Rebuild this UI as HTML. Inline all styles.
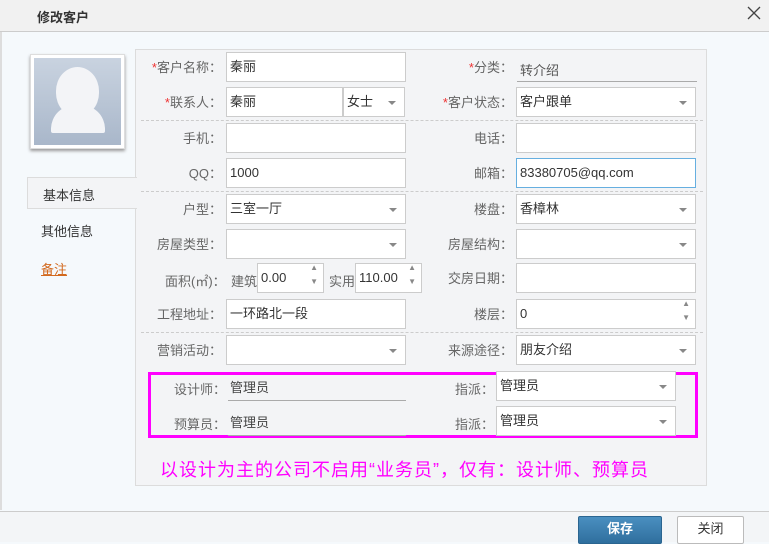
<!DOCTYPE html>
<html><head><meta charset="utf-8"><style>
*{margin:0;padding:0;box-sizing:border-box}
body{width:769px;height:542px;overflow:hidden;background:#f5f9fc;font-family:"Liberation Sans","Noto Sans CJK SC",sans-serif;font-size:13px;color:#555;position:relative}
.a{position:absolute}
.title{left:0;top:0;width:769px;height:32px;background:#f1f1f1;border-bottom:1px solid #ccc}
.panel{left:135px;top:49px;width:572px;height:437px;background:#f3f4f6;border:1px solid #dcdcdc}
.lab{text-align:right;width:120px;font-size:13px;color:#666;line-height:16px}
.inp{height:30px;background:#fff;border:1px solid #ccc;padding-left:3px;line-height:28px;color:#333;font-size:13px}
.dd:after{content:"";position:absolute;right:8px;top:13px;border-left:4px solid transparent;border-right:4px solid transparent;border-top:4px solid #888}
.dash{left:141px;width:562px;border-top:1px dashed #ccc;height:0}
.st{color:#e33}
</style></head><body>
<div class="a title"></div>
<div class="a" style="left:37px;top:7px;font-size:13px;color:#333;font-weight:bold">修改客户</div>
<svg class="a" style="left:747px;top:6px" width="14" height="14"><path d="M1 1L13 13M13 1L1 13" stroke="#444" stroke-width="1.3"/></svg>
<div class="a" style="left:0;top:32px;width:2px;height:478px;background:#ddd"></div>
<div class="a" style="left:30px;top:54px;width:95px;height:95px;background:#fff;border:1px solid #ddd;box-shadow:0 2px 3px #999"></div>
<div class="a" style="left:34px;top:58px;width:87px;height:87px;background:linear-gradient(#c9d3e0,#a9b7ca)"></div>
<div class="a" style="left:56px;top:67px;width:43px;height:50px;border-radius:50%/48%;background:#f3f4f7"></div>
<div class="a" style="left:51px;top:105px;width:54px;height:28px;border-radius:24px 24px 2px 2px;background:#f3f4f7"></div>
<div class="a panel"></div>
<div class="a" style="left:27px;top:177px;width:110px;height:32px;background:#f3f4f6;border:1px solid #dcdcdc;border-right:none"></div>
<div class="a" style="left:43px;top:185px;color:#333">基本信息</div>
<div class="a" style="left:41px;top:221px;color:#333">其他信息</div>
<div class="a" style="left:41px;top:259px;color:#d2691e;text-decoration:underline">备注</div>

<div class="a dash" style="top:120px"></div>
<div class="a dash" style="top:191px"></div>
<div class="a dash" style="top:332px"></div>

<div class="a lab" style="left:102px;top:60px"><span class="st">*</span>客户名称：</div>
<div class="a inp" style="left:226px;top:52px;width:180px">秦丽</div>
<div class="a lab" style="left:102px;top:95px"><span class="st">*</span>联系人：</div>
<div class="a inp" style="left:226px;top:87px;width:117px">秦丽</div>
<div class="a inp dd" style="left:343px;top:87px;width:62px">女士</div>
<div class="a lab" style="left:102px;top:131px">手机：</div>
<div class="a inp" style="left:226px;top:123px;width:180px"></div>
<div class="a lab" style="left:102px;top:166px">QQ：</div>
<div class="a inp" style="left:226px;top:158px;width:180px">1000</div>
<div class="a lab" style="left:102px;top:202px">户型：</div>
<div class="a inp dd" style="left:226px;top:194px;width:180px">三室一厅</div>
<div class="a lab" style="left:102px;top:237px">房屋类型：</div>
<div class="a inp dd" style="left:226px;top:229px;width:180px"></div>
<div class="a" style="left:165px;top:271px;color:#666">面积(㎡)：</div>
<div class="a" style="left:231px;top:271px;color:#666">建筑</div>
<div class="a inp" style="left:257px;top:263px;width:67px">0.00<span style="position:absolute;right:5px;top:-3px;font-size:8px;color:#888;line-height:14px">▲<br>▼</span></div>
<div class="a" style="left:329px;top:271px;color:#666">实用</div>
<div class="a inp" style="left:355px;top:263px;width:67px">110.00<span style="position:absolute;right:5px;top:-3px;font-size:8px;color:#888;line-height:14px">▲<br>▼</span></div>
<div class="a lab" style="left:102px;top:307px">工程地址：</div>
<div class="a inp" style="left:226px;top:299px;width:180px">一环路北一段</div>
<div class="a lab" style="left:102px;top:343px">营销活动：</div>
<div class="a inp dd" style="left:226px;top:335px;width:180px"></div>

<div class="a lab" style="left:393px;top:60px"><span class="st">*</span>分类：</div>
<div class="a" style="left:517px;top:60px;width:180px;height:22px;border-bottom:1px solid #aaa;padding-left:3px;color:#555">转介绍</div>
<div class="a lab" style="left:393px;top:95px"><span class="st">*</span>客户状态：</div>
<div class="a inp dd" style="left:516px;top:87px;width:180px">客户跟单</div>
<div class="a lab" style="left:393px;top:131px">电话：</div>
<div class="a inp" style="left:516px;top:123px;width:180px"></div>
<div class="a lab" style="left:393px;top:166px">邮箱：</div>
<div class="a inp" style="left:516px;top:158px;width:180px;border-color:#66afe0">83380705@qq.com</div>
<div class="a lab" style="left:393px;top:202px">楼盘：</div>
<div class="a inp dd" style="left:516px;top:194px;width:180px">香樟林</div>
<div class="a lab" style="left:393px;top:237px">房屋结构：</div>
<div class="a inp dd" style="left:516px;top:229px;width:180px"></div>
<div class="a lab" style="left:393px;top:271px">交房日期：</div>
<div class="a inp" style="left:516px;top:263px;width:180px"></div>
<div class="a lab" style="left:393px;top:307px">楼层：</div>
<div class="a inp" style="left:516px;top:299px;width:180px">0<span style="position:absolute;right:5px;top:-3px;font-size:8px;color:#888;line-height:14px">▲<br>▼</span></div>
<div class="a lab" style="left:393px;top:343px">来源途径：</div>
<div class="a inp dd" style="left:516px;top:335px;width:180px">朋友介绍</div>

<div class="a" style="left:148px;top:372px;width:550px;height:66px;border:3px solid #f0f"></div>
<div class="a" style="left:174px;top:379px;color:#666">设计师：</div>
<div class="a" style="left:228px;top:377px;width:178px;height:24px;border-bottom:1px solid #aaa;padding-left:2px;color:#444">管理员</div>
<div class="a" style="left:174px;top:414px;color:#666">预算员：</div>
<div class="a" style="left:228px;top:412px;width:178px;height:24px;border-bottom:1px solid #aaa;padding-left:2px;color:#444">管理员</div>
<div class="a" style="left:455px;top:379px;color:#666">指派：</div>
<div class="a inp dd" style="left:496px;top:371px;width:180px">管理员</div>
<div class="a" style="left:455px;top:414px;color:#666">指派：</div>
<div class="a inp dd" style="left:496px;top:406px;width:180px">管理员</div>

<div class="a" style="left:160px;top:456px;font-size:18px;letter-spacing:1px;color:#f0f;white-space:nowrap">以设计为主的公司不启用“业务员”，仅有：设计师、预算员</div>

<div class="a" style="left:0;top:511px;width:769px;height:31px;background:#f3f5f7;border-top:1px solid #ccc"></div>
<div class="a" style="left:578px;top:516px;width:84px;height:28px;background:linear-gradient(#4a8fc0,#2f6f9e);border:1px solid #2a6590;border-radius:2px;color:#fff;font-weight:bold;text-align:center;line-height:24px">保存</div>
<div class="a" style="left:677px;top:516px;width:67px;height:28px;background:#fff;border:1px solid #bbb;border-radius:2px;color:#333;text-align:center;line-height:24px">关闭</div>
</body></html>
